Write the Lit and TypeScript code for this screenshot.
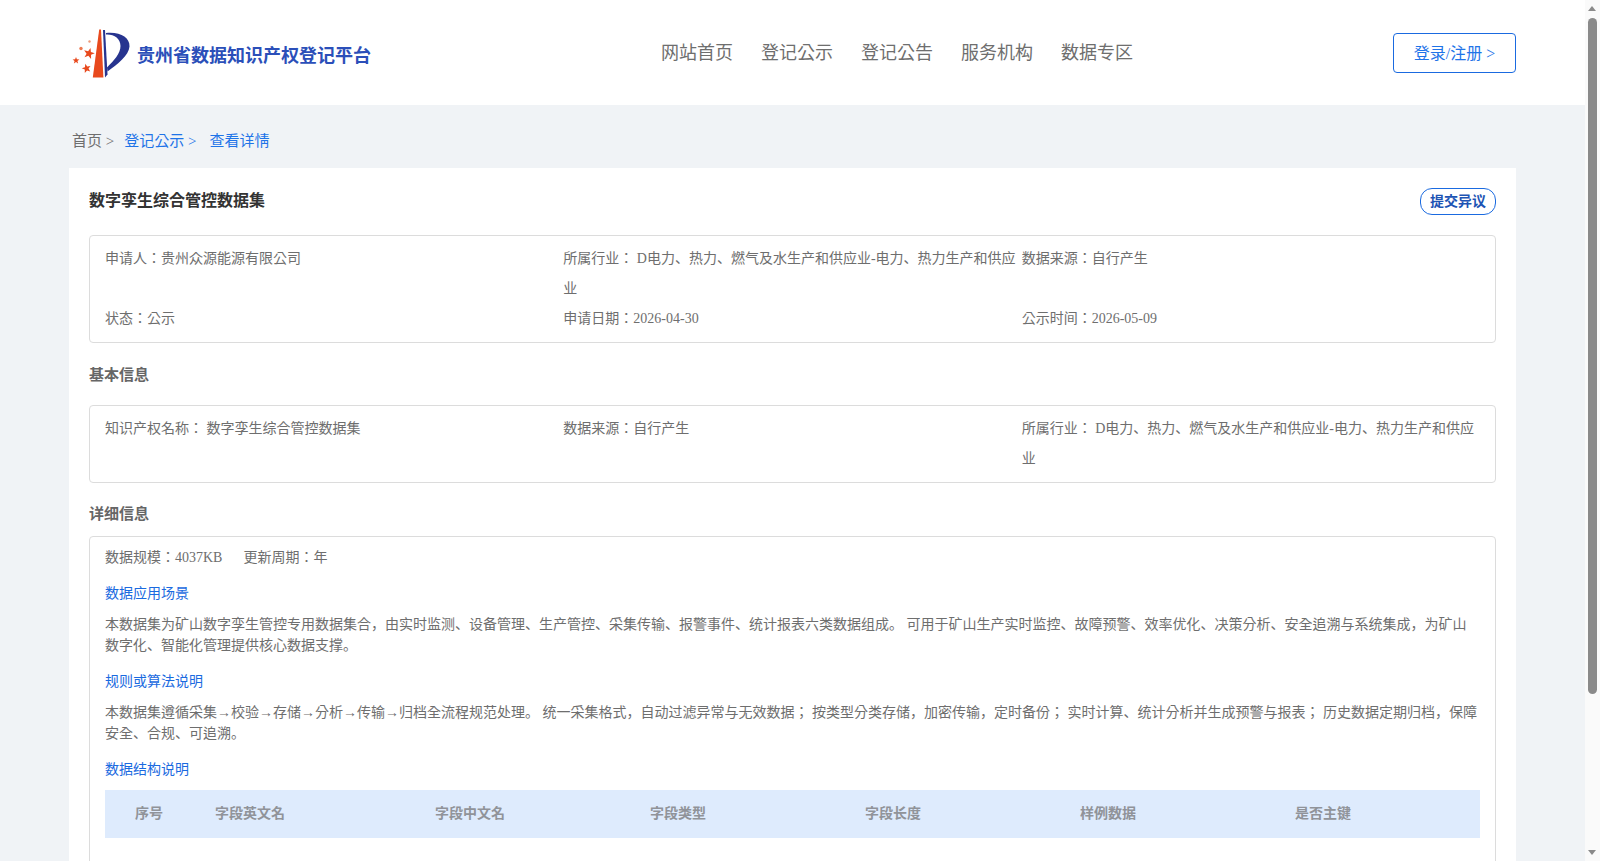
import { LitElement, html, css } from 'lit';
import { customElement } from 'lit/decorators.js';

const starPoints = (cx: number, cy: number, r: number, rot = 0) => {
  const pts: string[] = [];
  for (let i = 0; i < 10; i++) {
    const rad = i % 2 ? r * 0.42 : r;
    const a = (-90 + rot + i * 36) * (Math.PI / 180);
    pts.push(`${(cx + rad * Math.cos(a)).toFixed(2)},${(cy + rad * Math.sin(a)).toFixed(2)}`);
  }
  return pts.join(' ');
};

const NAV = ['网站首页', '登记公示', '登记公告', '服务机构', '数据专区'];
const COLUMNS = ['序号', '字段英文名', '字段中文名', '字段类型', '字段长度', '样例数据', '是否主键'];
const INDUSTRY = 'D电力、热力、燃气及水生产和供应业-电力、热力生产和供应业';

@customElement('app-root')
export class AppRoot extends LitElement {
  static styles = css`
    :host {
      display: block;
      padding-right: 15px;
      font-family: 'Liberation Serif', 'Noto Sans CJK KR', serif;
      font-size: 14px;
      color: #6e6e6e;
      background: #f0f3f6;
    }
    .header {
      display: flex;
      align-items: center;
      height: 105px;
      padding: 0 69px;
      background: #fff;
    }
    .logo {
      display: flex;
      align-items: center;
      gap: 7px;
      width: 592px;
      flex: none;
      box-sizing: border-box;
      padding-left: 1px;
    }
    .logo-text {
      padding-top: 2px;
      font-size: 18px;
      font-weight: 700;
      color: #2b4fb9;
    }
    .nav {
      display: flex;
      gap: 28px;
      margin-top: -4px;
      font-size: 18px;
      color: #6e6e6e;
    }
    .login {
      margin-left: auto;
      box-sizing: border-box;
      width: 123px;
      height: 40px;
      line-height: 40px;
      text-align: center;
      font-size: 16px;
      color: #1f74e8;
      border: 1px solid #1a6ae0;
      border-radius: 4px;
    }
    .page {
      padding: 0 69px 30px;
    }
    .crumbs {
      display: flex;
      align-items: center;
      height: 63px;
      padding: 6px 3px 0;
      box-sizing: border-box;
      font-size: 15px;
      color: #6e6e6e;
    }
    .crumbs a {
      color: #1f74e8;
    }
    .crumbs .first {
      margin-right: 10px;
    }
    .crumbs .second {
      margin-right: 13px;
    }
    .card {
      padding: 20px;
      background: #fff;
    }
    .title-row {
      display: flex;
      align-items: center;
      justify-content: space-between;
      margin-bottom: 20px;
    }
    .title {
      font-size: 16px;
      font-weight: 700;
      color: #333;
      margin-top: -5px;
    }
    .objection {
      box-sizing: border-box;
      width: 76px;
      height: 27px;
      line-height: 25px;
      text-align: center;
      font-weight: 700;
      color: #1d54b4;
      border: 1px solid #1a6ae0;
      border-radius: 12px;
    }
    .box {
      border: 1px solid #dcdcdc;
      border-radius: 4px;
      padding: 8px 15px;
    }
    .grid {
      display: grid;
      grid-template-columns: repeat(3, 1fr);
      line-height: 30px;
    }
    .section-title {
      font-size: 15px;
      font-weight: 700;
      color: #666;
      line-height: 22px;
    }
    .basic {
      margin: 21px 0 19px;
    }
    .detail {
      margin: 20px 0 11px;
    }
    .details {
      padding-top: 10px;
      line-height: 21px;
    }
    .scale {
      display: flex;
      gap: 21px;
    }
    .link {
      margin-top: 15px;
      color: #1a6ae0;
    }
    .text {
      margin-top: 10px;
    }
    .table-head {
      display: grid;
      grid-template-columns: 100px 220px repeat(4, 215px) 1fr;
      align-items: center;
      box-sizing: border-box;
      height: 48px;
      padding-bottom: 2px;
      margin-top: 10px;
      background: #deebfd;
      font-weight: 700;
      color: #909399;
    }
    .table-head span {
      padding-left: 10px;
    }
    .table-head span:first-child {
      padding-left: 30px;
    }
    .empty {
      padding: 20px 0 22px;
      text-align: center;
      color: #909399;
    }
    /* the page scrollbar is part of the reference, headless hides the real one */
    .scrollbar {
      position: fixed;
      top: 0;
      right: 0;
      bottom: 0;
      width: 15px;
      background: #fafafa;
    }
    .arrow {
      position: absolute;
      left: 3px;
      width: 0;
      height: 0;
      border-left: 4.5px solid transparent;
      border-right: 4.5px solid transparent;
    }
    .arrow.up {
      top: 6px;
      border-bottom: 5px solid #8a8a8a;
    }
    .arrow.down {
      bottom: 6px;
      border-top: 5px solid #8a8a8a;
    }
    .thumb {
      position: absolute;
      top: 18px;
      left: 3px;
      width: 9px;
      height: 676px;
      border-radius: 5px;
      background: #8a8a8a;
    }
  `;

  render() {
    return html`
      <div class="header">
        <div class="logo">
          <svg width="60" height="56" viewBox="10 4.5 60 56">
            <polygon points="39.2,9 41,9 43.4,57 32.8,57" fill="#e8491d"></polygon>
            <path d="M43 9.5 L45 9.5 L47.5 54 L45 57 Z" fill="#27348f"></path>
            <path d="M46 12.5 C60 11 70 17 69.5 26 C69 35 57 44 47.5 51 L47 47 C54 40 60.5 33 60.5 25.5 C60.5 18 54 13.5 46 14 Z" fill="#27348f"></path>
            <polygon points=${starPoints(29, 33, 5.8, 15)} fill="#e8491d"></polygon>
            <polygon points=${starPoints(26.5, 48, 4.8, -15)} fill="#e8491d"></polygon>
            <polygon points=${starPoints(16, 40, 3.6)} fill="#e8491d"></polygon>
            <circle cx="21" cy="28" r="1.7" fill="#ee7a52"></circle>
            <circle cx="29.5" cy="21" r="1.2" fill="#ee9a7a"></circle>
          </svg>
          <span class="logo-text">贵州省数据知识产权登记平台</span>
        </div>
        <div class="nav">${NAV.map(n => html`<span>${n}</span>`)}</div>
        <div class="login">登录/注册 &gt;</div>
      </div>
      <div class="page">
        <div class="crumbs">
          <span class="first">首页 &gt;</span>
          <a class="second">登记公示 &gt;</a>
          <a>查看详情</a>
        </div>
        <div class="card">
          <div class="title-row">
            <div class="title">数字孪生综合管控数据集</div>
            <div class="objection">提交异议</div>
          </div>
          <div class="box grid">
            <div>申请人：贵州众源能源有限公司</div>
            <div>所属行业： ${INDUSTRY}</div>
            <div>数据来源：自行产生</div>
            <div>状态：公示</div>
            <div>申请日期：2026-04-30</div>
            <div>公示时间：2026-05-09</div>
          </div>
          <div class="section-title basic">基本信息</div>
          <div class="box grid">
            <div>知识产权名称： 数字孪生综合管控数据集</div>
            <div>数据来源：自行产生</div>
            <div>所属行业： ${INDUSTRY}</div>
          </div>
          <div class="section-title detail">详细信息</div>
          <div class="box details">
            <div class="scale"><span>数据规模：4037KB</span><span>更新周期：年</span></div>
            <div class="link">数据应用场景</div>
            <div class="text">本数据集为矿山数字孪生管控专用数据集合，由实时监测、设备管理、生产管控、采集传输、报警事件、统计报表六类数据组成。 可用于矿山生产实时监控、故障预警、效率优化、决策分析、安全追溯与系统集成，为矿山数字化、智能化管理提供核心数据支撑。</div>
            <div class="link">规则或算法说明</div>
            <div class="text">本数据集遵循采集→校验→存储→分析→传输→归档全流程规范处理。 统一采集格式，自动过滤异常与无效数据； 按类型分类存储，加密传输，定时备份； 实时计算、统计分析并生成预警与报表； 历史数据定期归档，保障安全、合规、可追溯。</div>
            <div class="link">数据结构说明</div>
            <div class="table-head">${COLUMNS.map(c => html`<span>${c}</span>`)}</div>
            <div class="empty">暂无数据</div>
          </div>
        </div>
      </div>
      <div class="scrollbar">
        <div class="arrow up"></div>
        <div class="thumb"></div>
        <div class="arrow down"></div>
      </div>
    `;
  }
}
